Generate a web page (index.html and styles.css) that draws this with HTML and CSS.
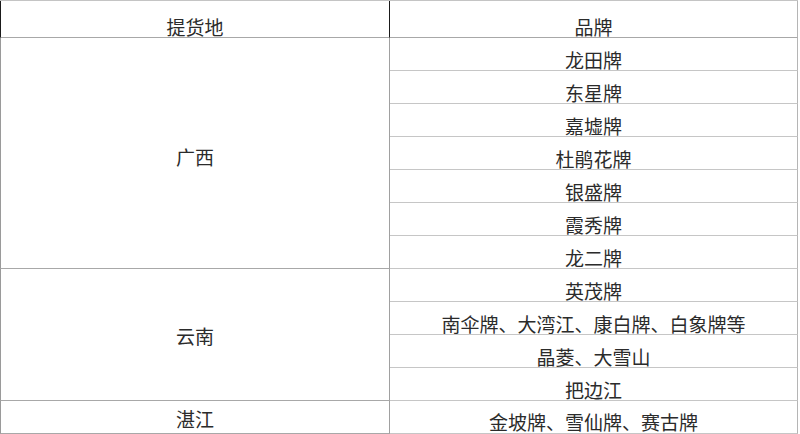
FILE: index.html
```html
<!DOCTYPE html>
<html lang="zh-CN">
<head>
<meta charset="utf-8">
<link rel="stylesheet" href="styles.css">
</head>
<body>
<div class="sheet">
  <div class="cell head head-left">提货地</div>
  <div class="cell head head-right">品牌</div>

  <div class="cell place place-gx">广西</div>
  <div class="cell brand">龙田牌</div>
  <div class="cell brand">东星牌</div>
  <div class="cell brand">嘉墟牌</div>
  <div class="cell brand">杜鹃花牌</div>
  <div class="cell brand">银盛牌</div>
  <div class="cell brand">霞秀牌</div>
  <div class="cell brand">龙二牌</div>

  <div class="cell place place-yn">云南</div>
  <div class="cell brand">英茂牌</div>
  <div class="cell brand">南伞牌、大湾江、康白牌、白象牌等</div>
  <div class="cell brand">晶菱、大雪山</div>
  <div class="cell brand">把边江</div>

  <div class="cell place place-zj">湛江</div>
  <div class="cell brand brand-last">金坡牌、雪仙牌、赛古牌</div>
</div>
</body>
</html>
```

FILE: styles.css
```css
html, body {
  margin: 0;
  padding: 0;
  background: #ffffff;
}

body {
  font-family: "Noto Sans CJK SC", "Noto Sans", sans-serif;
  font-size: 19px;
  color: #2b2b2b;
}

.sheet {
  display: grid;
  grid-template-columns: 390px 408px;
  grid-template-rows: 37px repeat(12, 33px);
  width: 798px;
  border-top: 1px solid #c4c4c4;
  box-sizing: border-box;
}

.cell {
  box-sizing: border-box;
  display: flex;
  justify-content: center;
  line-height: 19px;
  border-bottom: 1px solid #bdbdbd;
  white-space: nowrap;
}

.head {
  align-items: flex-end;
  padding-bottom: 1px;
}

.head-left {
  border-left: 1px solid #1a1a1a;
  border-right: 1px solid #1a1a1a;
  border-bottom-color: #a8a8a8;
}

.head-right {
  border-right: 1px solid #b5b5b5;
  border-bottom-color: #a8a8a8;
}

.place {
  grid-column: 1;
  align-items: center;
  border-left: 1px solid #9a9a9a;
  border-right: 1px solid #a0a0a0;
  border-bottom-color: #a8a8a8;
}

.place-gx {
  grid-row: 2 / span 7;
  padding-top: 6px;
}

.place-yn {
  grid-row: 9 / span 4;
  padding-top: 2px;
}

.place-zj {
  grid-row: 13 / span 1;
  padding-top: 2px;
}

.brand {
  grid-column: 2;
  align-items: flex-end;
  padding-bottom: 1px;
  border-right: 1px solid #b5b5b5;
  border-bottom-color: #c6c6c6;
}

.brand-last {
  padding-bottom: 2px;
}
```
